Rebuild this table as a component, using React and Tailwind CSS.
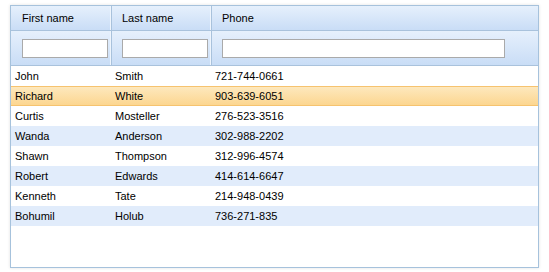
const rows = [
  ["John", "Smith", "721-744-0661"],
  ["Richard", "White", "903-639-6051"],
  ["Curtis", "Mosteller", "276-523-3516"],
  ["Wanda", "Anderson", "302-988-2202"],
  ["Shawn", "Thompson", "312-996-4574"],
  ["Robert", "Edwards", "414-614-6647"],
  ["Kenneth", "Tate", "214-948-0439"],
  ["Bohumil", "Holub", "736-271-835"],
]

const headCell =
  "border-r border-r-[#a9c2dc] shadow-[inset_-1px_0_0_#eef5fd] bg-gradient-to-b from-[#e6f0fc] to-[#c9ddf6]"

export default function App() {
  return (
    <div className="w-[549px] h-[272px] bg-white pt-[5px] pl-[10px] font-['Liberation_Sans',Arial,sans-serif] text-[11px] text-black">
      <div className="w-[529px] h-[263px] border border-[#a6c2dc] shadow-[0_0_3px_rgba(0,0,0,0.12)] bg-white flex flex-col">
        <div className="flex h-[25px] border-b border-b-[#a9c2dc]">
          <div className={`w-[101px] pl-[11px] flex items-center ${headCell}`}>First name</div>
          <div className={`w-[100px] pl-[10px] flex items-center ${headCell}`}>Last name</div>
          <div className={`flex-1 pl-[10px] flex items-center ${headCell} border-r-0 shadow-none`}>Phone</div>
        </div>
        <div className="flex h-[35px] border-b border-b-[#a9c2dc]">
          <div className={`w-[101px] pl-[11px] flex items-center ${headCell}`}>
            <input className="w-[86px] h-[19px] bg-white border border-[#aaaaaa] outline-none" />
          </div>
          <div className={`w-[100px] pl-[10px] flex items-center ${headCell}`}>
            <input className="w-[86px] h-[19px] bg-white border border-[#aaaaaa] outline-none" />
          </div>
          <div className={`flex-1 pl-[10px] flex items-center ${headCell} border-r-0 shadow-none`}>
            <input className="w-[283px] h-[19px] bg-white border border-[#aaaaaa] outline-none" />
          </div>
        </div>
        {rows.map((r, i) => {
          const selected = i === 1
          const bg = selected
            ? "bg-gradient-to-b from-[#fde8bd] to-[#fcd690] border-y border-y-[#f6c36f]"
            : i % 2 === 1
            ? "bg-[#e1ecfb]"
            : "bg-white"
          return (
            <div key={i} className={`flex h-[20px] items-center ${bg}`}>
              <div className="w-[100px] pl-[4px]">{r[0]}</div>
              <div className="w-[100px] pl-[4px]">{r[1]}</div>
              <div className="flex-1 pl-[4px]">{r[2]}</div>
            </div>
          )
        })}
      </div>
    </div>
  )
}
